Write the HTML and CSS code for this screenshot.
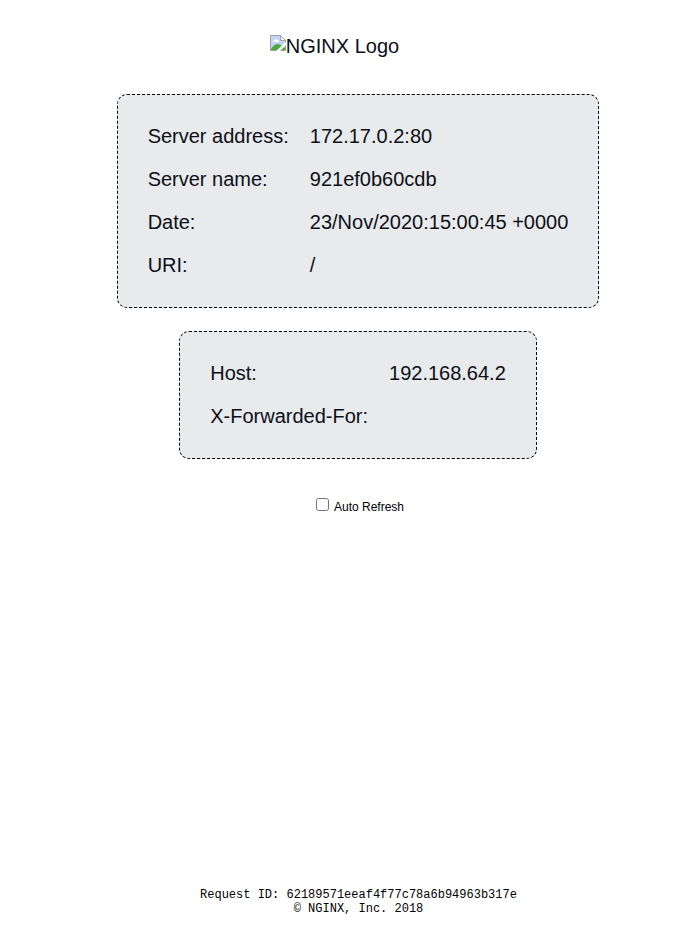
FILE: index.html
```html
<!DOCTYPE html>
<html lang="en">
<head>
<meta charset="utf-8">
<title>Hello World</title>
<link rel="stylesheet" href="styles.css">
</head>
<body>
<header class="logo">
<svg class="broken" viewBox="0 0 16 16" aria-hidden="true">
<path d="M1 1H10V6H15V15H1Z" fill="#c2d5f4"/>
<path d="M3 7Q3 5 5 5Q6 3 7 5Q9 5 9 7Z" fill="#fff"/>
<path d="M1 14Q4 9 8 9Q10 9 12 11L15 13V15H1Z" fill="#4caa3c"/>
<path d="M10 1L15 6H10Z" fill="#fff"/>
<path d="M15.500 15.500H0.500V0.500H10.500L15.500 5.500V15.500M10.500 0.500V5.500H15.500" fill="none" stroke="#a0a0a0"/>
<path d="M6 16L16 7V10L10 16Z" fill="#fff"/>
</svg><span>NGINX Logo</span>
</header>
<main class="content">
<section class="info">
<table>
<tr><th scope="row">Server address:</th><td>172.17.0.2:80</td></tr>
<tr><th scope="row">Server name:</th><td>921ef0b60cdb</td></tr>
<tr><th scope="row">Date:</th><td>23/Nov/2020:15:00:45 +0000</td></tr>
<tr><th scope="row">URI:</th><td>/</td></tr>
</table>
</section>
<section class="info">
<table>
<tr><th scope="row">Host:</th><td>192.168.64.2</td></tr>
<tr><th scope="row">X-Forwarded-For:</th><td></td></tr>
</table>
</section>
<div class="check"><input type="checkbox" id="refresh"><label for="refresh">Auto Refresh</label></div>
</main>
<footer class="footer">
<p>Request ID: 62189571eeaf4f77c78a6b94963b317e</p>
<p>© NGINX, Inc. 2018</p>
</footer>
</body>
</html>
```
FILE: styles.css
```css
* {
  box-sizing: border-box;
}

body {
  margin: 0;
  min-height: 100vh;
  display: flex;
  flex-direction: column;
  background: #fff;
  color: #0c1018;
  font: 20px/23px "Liberation Sans", Arial, sans-serif;
}

.logo {
  display: flex;
  justify-content: center;
  padding: 35px 12px 36px 0;
}

.broken {
  width: 16px;
  height: 16px;
}

.content {
  flex: 1;
  display: flex;
  flex-direction: column;
  align-items: center;
  gap: 23px;
  padding-left: 35px;
}

.info {
  border: 1px dashed #000;
  border-radius: 10px;
  background: #e8eaec;
  padding: 20px;
}

table {
  border-collapse: collapse;
}

th,
td {
  padding: 10px;
  font-weight: normal;
  text-align: left;
  white-space: nowrap;
}

th {
  padding-right: 11px;
}

.check {
  display: flex;
  align-items: baseline;
  gap: 5px;
  margin-top: 14px;
  padding-left: 4px;
  color: #000;
  font-size: 12px;
}

.check input {
  width: 13px;
  height: 13px;
  margin: 0;
}

.footer {
  padding: 0 0 36px 36px;
  color: #000;
  font: 12px/14px "Liberation Mono", "Courier New", monospace;
  text-align: center;
}

.footer p {
  margin: 0;
}
```
